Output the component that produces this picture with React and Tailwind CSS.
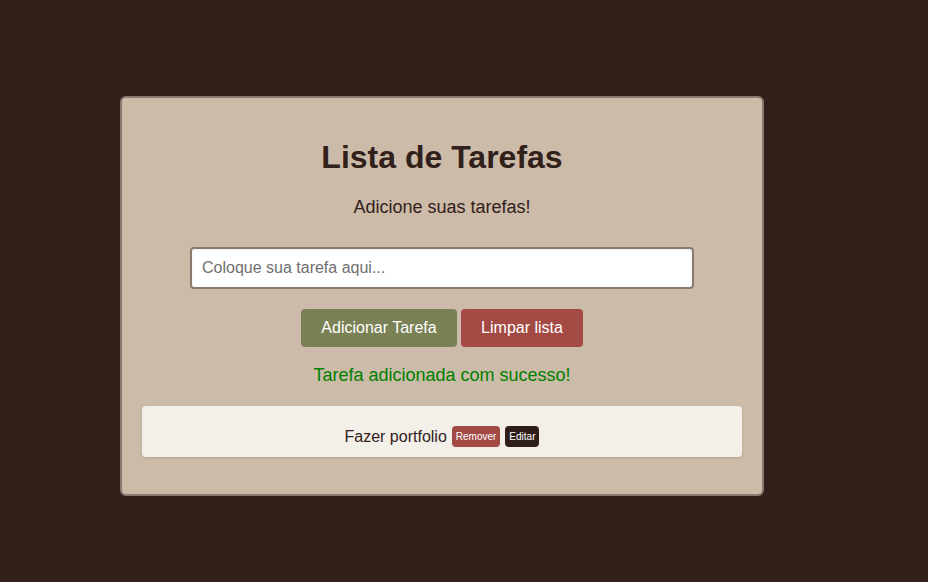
export default function App() {
  return (
    <div className="min-h-[582px] w-full bg-[#32201b] pt-[96px] font-['Liberation_Sans',Arial,sans-serif]">
      <div className="ml-[120px] w-[644px] rounded-md border-2 border-[#8a7b70] bg-[#cbbba8] px-5 pt-[41px] pb-[37px] text-center">
        <h1 className="text-[32px] font-bold leading-[37px] text-[#32201b]">Lista de Tarefas</h1>
        <p className="mt-[21px] text-[18px] leading-[21px] text-[#32201b]">Adicione suas tarefas!</p>
        <div className="mt-[29px] flex justify-center">
          <input
            type="text"
            placeholder="Coloque sua tarefa aqui..."
            className="h-[42px] w-[504px] rounded-[4px] border-2 border-[#8a7b70] bg-white px-[10px] text-[16px] text-[#32201b] shadow-[inset_0_1px_3px_rgba(0,0,0,0.08)] outline-none placeholder:text-[#6f6f6f]"
          />
        </div>
        <div className="mt-5 flex justify-center gap-1">
          <button className="h-[38px] w-[156px] rounded-[4px] bg-[#7a8155] text-[16px] text-white">Adicionar Tarefa</button>
          <button className="h-[38px] w-[122px] rounded-[4px] bg-[#a34a44] text-[16px] text-white">Limpar lista</button>
        </div>
        <p className="mt-[18px] text-[18px] leading-[21px] text-[#008000]">Tarefa adicionada com sucesso!</p>
        <ul className="mt-5">
          <li className="flex h-[51px] items-center justify-center rounded-[4px] bg-[#f3f0ea] pt-[10px] text-[16px] text-[#32201b] shadow-[0_1px_3px_rgba(0,0,0,0.12)]">
            <span>Fazer portfolio</span>
            <button className="ml-[5px] h-[21px] rounded-[4px] bg-[#a34a44] px-[4px] text-[10px] text-white">Remover</button>
            <button className="ml-[5px] h-[21px] rounded-[4px] bg-[#2f1d18] px-[4px] text-[10px] text-white">Editar</button>
          </li>
        </ul>
      </div>
    </div>
  );
}
